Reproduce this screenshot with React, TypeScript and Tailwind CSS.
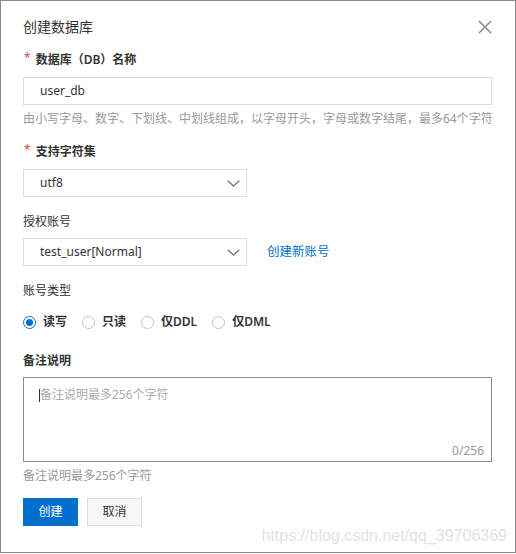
import React from 'react';

const font = { fontFamily: '"Noto Sans", "Noto Sans CJK SC", sans-serif' };

const Chevron = () => (
  <svg width="13" height="7" viewBox="0 0 13 7" fill="none" className="shrink-0">
    <path d="M0.7 0.7 L6.5 6 L12.3 0.7" stroke="#777" strokeWidth="1.3" />
  </svg>
);

const Label: React.FC<{ text: string; required?: boolean; bold?: boolean; className?: string }> = ({
  text,
  required,
  bold,
  className,
}) => (
  <div className={`flex items-center h-[18px] text-[12px] leading-[18px] text-[#333] ${bold ? 'font-semibold' : ''} ${className || ''}`}>
    {required && <span className="text-[#e5403a] mr-[5px] ml-px text-[12px] font-normal relative -top-[2px]">*</span>}
    {text}
  </div>
);

const Select: React.FC<{ value: string }> = ({ value }) => (
  <div className="w-[224px] h-[28px] border border-[#dcdcdc] bg-white flex items-center justify-between pl-[16px] pr-[6px] text-[12px] text-[#333]">
    <span>{value}</span>
    <Chevron />
  </div>
);

const Radio: React.FC<{ label: string; checked?: boolean }> = ({ label, checked }) => (
  <label className="flex items-center gap-[7px] cursor-pointer">
    <span
      className={`w-[13px] h-[13px] rounded-full border flex items-center justify-center bg-white ${
        checked ? 'border-[#0070cc]' : 'border-[#c4c4c4]'
      }`}
    >
      {checked && <span className="w-[7px] h-[7px] rounded-full bg-[#0070cc]" />}
    </span>
    <span className="text-[12px] leading-[18px] font-semibold text-[#333]">{label}</span>
  </label>
);

export default function App() {
  return (
    <div style={font} className="relative w-[516px] h-[553px] bg-white border border-[#8a8a8a] pl-[22px] pr-[23px] overflow-hidden">
      <div className="flex items-center justify-between h-[20px] mt-[16px]">
        <h1 className="text-[14px] leading-[20px] font-normal text-[#333]">创建数据库</h1>
        <button className="w-[14px] h-[14px] flex items-center justify-center">
          <svg width="14" height="14" viewBox="0 0 14 14">
            <path d="M1 1 L13 13 M13 1 L1 13" stroke="#888" strokeWidth="1.5" />
          </svg>
        </button>
      </div>

      <Label text="数据库（DB）名称" required bold className="mt-[14px]" />
      <div className="mt-[8px] w-[469px] h-[28px] border border-[#dcdcdc] flex items-center pl-[16px] text-[12px] text-[#333]">
        user_db
      </div>
      <div className="mt-[5px] text-[12px] leading-[18px] text-[#999] whitespace-nowrap">
        由小写字母、数字、下划线、中划线组成，以字母开头，字母或数字结尾，最多64个字符
      </div>

      <Label text="支持字符集" required bold className="mt-[15px]" />
      <div className="mt-[8px]">
        <Select value="utf8" />
      </div>

      <Label text="授权账号" className="mt-[16px]" />
      <div className="mt-[7px] flex items-center gap-[20px]">
        <Select value="test_user[Normal]" />
        <a className="text-[12.5px] text-[#0070cc] cursor-pointer">创建新账号</a>
      </div>

      <Label text="账号类型" className="mt-[16px]" />
      <div className="mt-[13px] flex items-center gap-[15px] h-[18px]">
        <Radio label="读写" checked />
        <Radio label="只读" />
        <Radio label="仅DDL" />
        <Radio label="仅DML" />
      </div>

      <Label text="备注说明" bold className="mt-[21px]" />
      <div className="relative mt-[7px] w-[469px] h-[85px] border border-[#8c8c8c]">
        <textarea
          className="w-full h-full resize-none outline-none pl-[16px] pt-[8px] text-[12px] leading-[18px] text-[#333] placeholder:text-[#aaa]"
          placeholder="备注说明最多256个字符"
        />
        <span className="absolute left-[15px] top-[11px] w-px h-[13px] bg-[#333]" />
        <span className="absolute right-[7px] bottom-[1px] text-[12px] leading-[18px] text-[#999]">0/256</span>
      </div>
      <div className="mt-[5px] text-[12px] leading-[18px] text-[#999]">备注说明最多256个字符</div>

      <div className="mt-[13px] flex gap-[9px]">
        <button className="w-[55px] h-[28px] bg-[#0070cc] text-white text-[12px]">创建</button>
        <button className="w-[55px] h-[28px] bg-[#f7f7f7] border border-[#dcdcdc] text-[#333] text-[12px]">取消</button>
      </div>

      <div
        className="absolute right-[8px] bottom-[7px] text-[16px] leading-[18px] text-[#e2e2e2] pointer-events-none"
        style={{ fontFamily: '"Liberation Sans", Arial, sans-serif' }}
      >
        https://blog.csdn.net/qq_39706369
      </div>
    </div>
  );
}
